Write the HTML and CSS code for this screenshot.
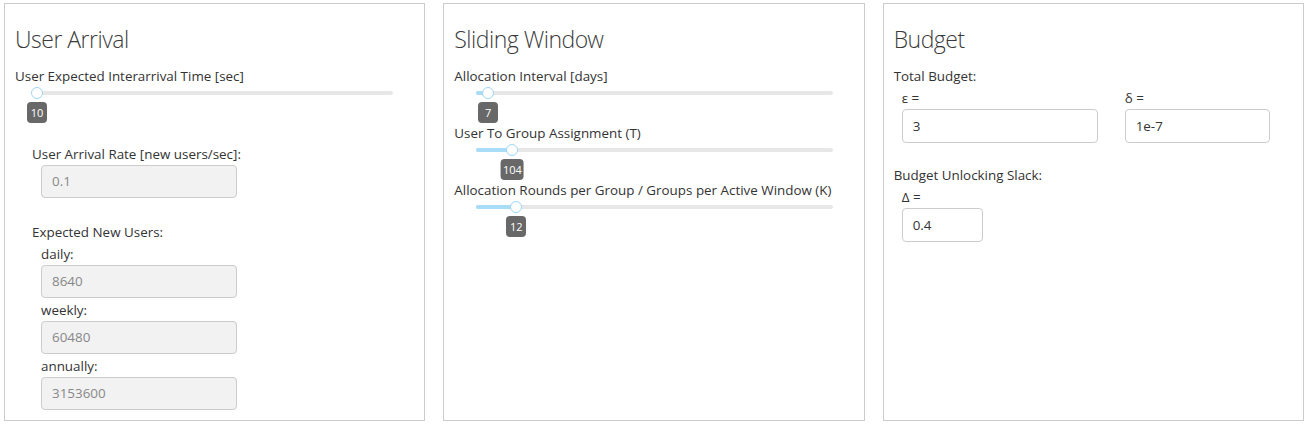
FILE: index.html
```html
<!DOCTYPE html>
<html lang="en">
<head>
<meta charset="utf-8">
<title>Parameters</title>
<link rel="stylesheet" href="styles.css">
</head>
<body>
<div class="board">
  <section class="panel">
    <h2 class="panel-title">User Arrival</h2>
    <div class="slider-group">
      <div class="field-label">User Expected Interarrival Time [sec]</div>
      <div class="slider">
        <div class="track"><div class="fill" style="width:0%"></div><span class="handle" style="left:0%"></span></div>
        <div class="bubble-row"><span class="bubble" style="left:0%">10</span></div>
      </div>
    </div>
    <div class="group group-rate">
      <div class="field-label">User Arrival Rate [new users/sec]:</div>
      <div class="sub">
        <div class="input readonly w196">0.1</div>
      </div>
    </div>
    <div class="group group-expected">
      <div class="field-label">Expected New Users:</div>
      <div class="sub">
        <div class="field-label sub-label">daily:</div>
        <div class="input readonly w196">8640</div>
        <div class="field-label">weekly:</div>
        <div class="input readonly w196">60480</div>
        <div class="field-label">annually:</div>
        <div class="input readonly w196">3153600</div>
      </div>
    </div>
  </section>

  <section class="panel">
    <h2 class="panel-title">Sliding Window</h2>
    <div class="slider-group">
      <div class="field-label">Allocation Interval [days]</div>
      <div class="slider">
        <div class="track"><div class="fill" style="width:3.3%"></div><span class="handle" style="left:3.3%"></span></div>
        <div class="bubble-row"><span class="bubble" style="left:3.3%">7</span></div>
      </div>
    </div>
    <div class="slider-group">
      <div class="field-label">User To Group Assignment (T)</div>
      <div class="slider">
        <div class="track"><div class="fill" style="width:10.1%"></div><span class="handle" style="left:10.1%"></span></div>
        <div class="bubble-row"><span class="bubble" style="left:10.1%">104</span></div>
      </div>
    </div>
    <div class="slider-group">
      <div class="field-label">Allocation Rounds per Group / Groups per Active Window (K)</div>
      <div class="slider">
        <div class="track"><div class="fill" style="width:11.2%"></div><span class="handle" style="left:11.2%"></span></div>
        <div class="bubble-row"><span class="bubble" style="left:11.2%">12</span></div>
      </div>
    </div>
  </section>

  <section class="panel">
    <h2 class="panel-title">Budget</h2>
    <div class="field-label">Total Budget:</div>
    <div class="budget-row">
      <div class="budget-col">
        <div class="field-label sub-label">ε =</div>
        <div class="input editable w196">3</div>
      </div>
      <div class="budget-col">
        <div class="field-label sub-label">δ =</div>
        <div class="input editable w145">1e-7</div>
      </div>
    </div>
    <div class="group group-slack">
      <div class="field-label">Budget Unlocking Slack:</div>
      <div class="budget-row">
        <div class="budget-col">
          <div class="field-label sub-label">Δ =</div>
          <div class="input editable w81">0.4</div>
        </div>
      </div>
    </div>
  </section>
</div>
</body>
</html>
```

FILE: styles.css
```css
body {
  margin: 0;
  padding: 3px 4px;
  background: #fff;
  font-family: "Open Sans", "DejaVu Sans", sans-serif;
  font-size: 13.4px;
  color: #333;
}

.board {
  display: grid;
  grid-template-columns: repeat(3, 1fr);
  gap: 18px;
}

.panel {
  box-sizing: border-box;
  height: 418px;
  border: 1px solid #ccc;
  padding: 0 10px;
  background: #fff;
}

.panel-title {
  margin: 22px 0 14px;
  font-family: "Open Sans Light", "Open Sans", sans-serif;
  font-size: 23px;
  font-weight: 300;
  line-height: 26px;
  letter-spacing: -0.5px;
  color: #3a3a3a;
}

.field-label {
  display: block;
  line-height: 20px;
}

.sub-label {
  margin-top: 2px;
}

/* slider */
.slider {
  margin: 5px 21px 0 22px;
}

.track {
  position: relative;
  height: 4px;
  background: #e7e7e7;
  border-radius: 2px;
}

.fill {
  height: 100%;
  background: #a9dcf6;
  border-radius: 2px;
}

.handle {
  position: absolute;
  top: 50%;
  width: 12px;
  height: 12px;
  box-sizing: border-box;
  border: 1px solid #9fd6f4;
  border-radius: 50%;
  background: #fff;
  transform: translate(-50%, -50%);
}

.bubble-row {
  position: relative;
  height: 21px;
  margin-top: 7px;
}

.bubble {
  position: absolute;
  top: 0;
  transform: translateX(-50%);
  box-sizing: border-box;
  min-width: 20px;
  height: 21px;
  padding: 0 2px;
  border-radius: 4px;
  background: #686868;
  color: #fff;
  font-size: 11px;
  line-height: 21px;
  text-align: center;
}

/* groups */
.group-rate {
  margin-top: 21px;
  padding-left: 17px;
}

.group-expected {
  margin-top: 24px;
  padding-left: 17px;
}

.sub {
  padding-left: 9px;
}

.input {
  box-sizing: border-box;
  height: 34px;
  margin-top: 2px;
  padding: 0 10px;
  border: 1px solid #ccc;
  border-radius: 4px;
  line-height: 32px;
  font-size: 13.4px;
}

.readonly {
  height: 33px;
  margin: 1px 0 2px;
  line-height: 31px;
  background: #f2f2f2;
  color: #888;
}

.editable {
  background: #fff;
  color: #333;
  margin-top: 1px;
}

.w196 { width: 196px; }
.w145 { width: 145px; }
.w81 { width: 81px; }

.budget-row {
  display: grid;
  grid-template-columns: 223px 1fr;
  padding-left: 8px;
}

.group-slack {
  margin-top: 22px;
}
```
